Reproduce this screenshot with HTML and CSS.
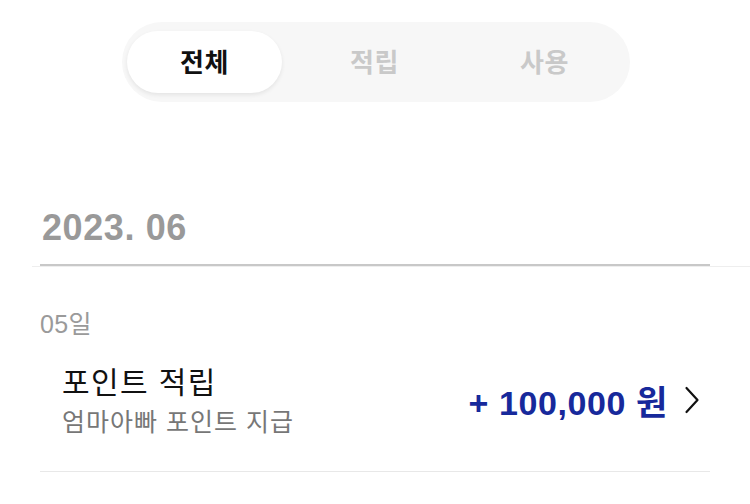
FILE: index.html
```html
<!DOCTYPE html>
<html lang="ko">
<head>
<meta charset="utf-8">
<link rel="stylesheet" href="styles.css">
</head>
<body>
<div class="tabs-wrap">
  <div class="tabs">
    <div class="tab active">전체</div>
    <div class="tab">적립</div>
    <div class="tab">사용</div>
  </div>
</div>
<div class="month">
  <div class="month-title">2023. 06</div>
</div>
<div class="list">
  <div class="day">05일</div>
  <div class="item">
    <div class="item-text">
      <div class="item-title">포인트 적립</div>
      <div class="item-sub">엄마아빠 포인트 지급</div>
    </div>
    <div class="item-amount">
      <span class="amount">+ 100,000 원</span>
      <svg class="chev" width="16" height="28" viewBox="0 0 16 28"><path d="M2.5 2 L13.5 14 L2.5 26" fill="none" stroke="#111" stroke-width="2.2" stroke-linecap="round" stroke-linejoin="round"/></svg>
    </div>
  </div>
</div>
</body>
</html>
```
FILE: styles.css
```css
html, body {
  margin: 0;
  padding: 0;
  background: #fff;
}
body {
  font-family: "Liberation Sans", "Noto Sans CJK KR", sans-serif;
  color: #111;
}
.tabs-wrap {
  display: flex;
  justify-content: center;
  padding: 22px 0 0 2px;
}
.tabs {
  display: flex;
  gap: 15px;
  width: 508px;
  box-sizing: border-box;
  height: 80px;
  padding: 9px 6px 9px 5px;
  background: #f7f7f7;
  border-radius: 40px;
}
.tab {
  width: 155px;
  height: 62px;
  border-radius: 31px;
  display: flex;
  align-items: center;
  justify-content: center;
  padding-bottom: 3px;
  box-sizing: border-box;
  font-family: "Noto Sans CJK KR", sans-serif;
  font-weight: 700;
  font-size: 26px;
  letter-spacing: 0.5px;
  color: #c9c9c9;
}
.tab.active {
  background: #fff;
  color: #111;
  box-shadow: 0 2px 4px rgba(0,0,0,0.08);
}
.month {
  margin: 105px 0 0 32px;
  border-bottom: 1px solid #eeeeee;
}
.month-title {
  margin: 0 40px 0 8px;
  padding: 0 0 0 2px;
  height: 57px;
  line-height: 42px;
  font-size: 36px;
  font-weight: 700;
  letter-spacing: 0.6px;
  color: #999;
  border-bottom: 2px solid #c8c8c8;
}
.list {
  margin: 0 40px;
}
.day {
  margin-top: 42px;
  font-size: 25px;
  line-height: 30px;
  letter-spacing: 0.3px;
  color: #9a9a9a;
}
.item {
  display: flex;
  align-items: center;
  justify-content: space-between;
  padding: 21px 10px 31px 22px;
  border-bottom: 1px solid #e8e8e8;
}
.item-title {
  font-family: "Noto Sans CJK KR", sans-serif;
  font-size: 30px;
  line-height: 40px;
  letter-spacing: 1.4px;
  color: #111;
}
.item-sub {
  font-family: "Noto Sans CJK KR", sans-serif;
  font-size: 25px;
  line-height: 40px;
  letter-spacing: 1px;
  color: #777;
}
.item-amount {
  display: flex;
  align-items: center;
  gap: 16px;
}
.amount {
  font-size: 34px;
  font-weight: 700;
  letter-spacing: 0.6px;
  color: #17299b;
}
.chev {
  display: block;
}
```
